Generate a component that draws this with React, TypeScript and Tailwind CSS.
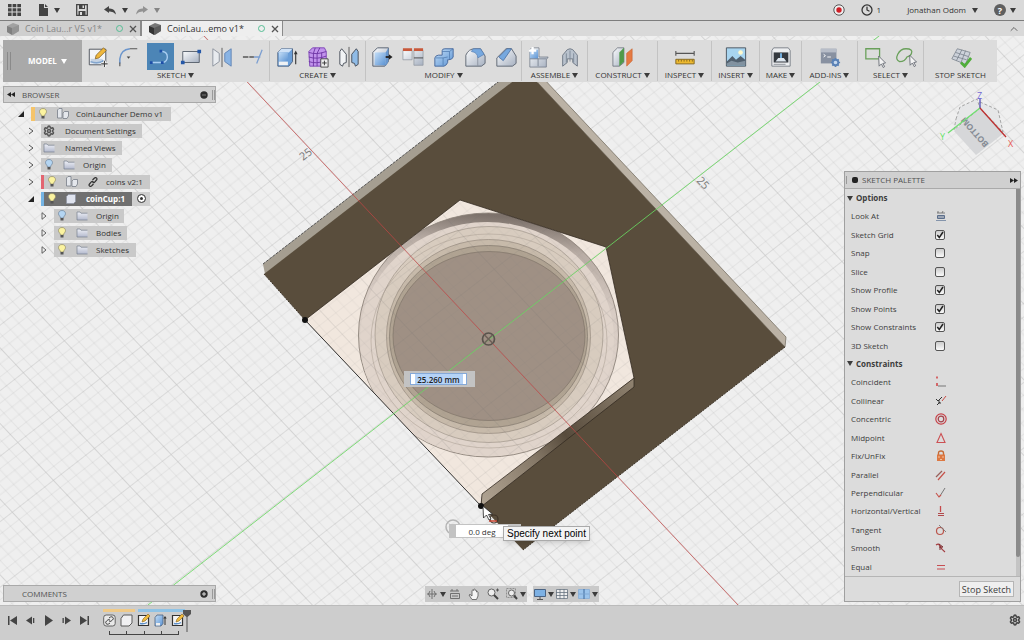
import type { ReactNode } from "react"
import { ChevronUp, Clock, Settings } from "lucide-react"
import clsx from "clsx"

const Svg = ({ children, size = "w-6 h-6", box = "0 0 24 24" }: { children: ReactNode; size?: string; box?: string }) => (
  <svg viewBox={box} className={clsx(size, "shrink-0")} fill="none" aria-hidden="true">
    {children}
  </svg>
)

const Caret = ({ className = "text-[#3c3c3c]" }: { className?: string }) => (
  <svg viewBox="0 0 6 5" className={clsx("h-[5px] w-1.5 shrink-0", className)} aria-hidden="true">
    <path d="M0 0h6L3 5z" fill="currentColor" />
  </svg>
)

/* ---------- Toolbar icons ---------- */

const icons: Record<string, ReactNode> = {
  createSketch: (
    <>
      <path d="M2.500 3.500h18v17h-18z" fill="#f3f5f8" stroke="#4a4f58" />
      <path d="M4 17q8 3 14-1" stroke="#4c83c0" strokeWidth="1.500" />
      <path d="M4 14h13v5H4z" fill="#a9bdd6" opacity=".6" />
      <path d="m9 14 1-4 8-8 3 3-8 8z" fill="#f0b83c" stroke="#7a5a24" strokeWidth=".8" />
      <path d="M19 16v7M15.500 19.500h7" stroke="#fff" strokeWidth="3" />
      <path d="M19 16v7M15.500 19.500h7" stroke="#444" strokeWidth="1.300" />
    </>
  ),
  fillet2d: (
    <>
      <path d="M2 19v-5Q3 4 13 3" stroke="#6b95cc" strokeWidth="1.600" />
      <path d="M13 3h8M2 18v4" stroke="#555" strokeWidth="1.200" />
      <path d="M9.500 11.500h4l-2 2.500z" fill="#444" />
    </>
  ),
  line: (
    <>
      <path d="M3 18h12q5-1 5-6t-5-6h-2" stroke="#a8cdf1" strokeWidth="1.500" />
      <path d="M1 16.500h3v3H1zM13 16.500h3v3h-3zM11.500 4h3v3h-3z" fill="#1d4fa8" />
    </>
  ),
  rectangle: (
    <>
      <path d="M3 6h18v12H3z" fill="url(#steel)" stroke="#555e6a" />
      <path d="M19 4h4v4h-4zM1 16h4v4H1z" fill="#2558a8" />
    </>
  ),
  mirror: (
    <>
      <path d="m2 3 7 5v9l-7 5z" fill="#e8ebef" stroke="#8b929c" />
      <path d="m22 3-7 5v9l7 5z" fill="#8ab4e4" stroke="#6083b3" />
      <path d="M12 2v21" stroke="#555" />
    </>
  ),
  trim: (
    <>
      <path d="M1 12h12" stroke="#555" strokeWidth="1.400" strokeDasharray="6 1" />
      <path d="M13 12h7M22 4l-6 15" stroke="#7c9fd1" strokeWidth="1.400" />
    </>
  ),
  extrude: (
    <>
      <path d="M2 7 6 3h12v14l-4 5H2z" fill="#6a9ed8" stroke="#4a5f7d" />
      <path d="m2 7 4-4h12l-4 4z" fill="#cfe2f7" />
      <path d="M3 7h10v10H3z" fill="url(#blue)" />
      <path d="M3 17h10v4H3z" fill="#eef1f4" />
      <path d="M21.500 20V7" stroke="#333" strokeWidth="1.200" />
      <path d="M19.500 9h4l-2-4z" fill="#333" />
    </>
  ),
  form: (
    <>
      <path d="M2 6 6 2h13l2 4v13l-4 3H3z" fill="#c193ec" stroke="#7c43b5" strokeLinejoin="round" />
      <path d="M2 7q8 3 19-1M2 12q9 3 19-1M2 17q8 3 18-1M7 8v14M11 8v14M16 7v14M9 2 7 8M14 2l-3 6" stroke="#6d35a4" />
      <path d="M15 14h8v9h-8z" fill="#eee" stroke="#444" />
      <path d="M19 16v5M16.500 18.500h5" stroke="#333" />
    </>
  ),
  mirrorFeature: (
    <>
      <path d="M2 6 4 3l5 6v9l-3 1-1 3-3-2z" fill="#f1f3f5" stroke="#444a55" />
      <path d="m22 6-2-3-5 6v9l3 1 1 3 3-2z" fill="#8fbbe6" stroke="#444a55" />
      <path d="M12 1v22" stroke="#555" />
    </>
  ),
  pressPull: (
    <>
      <path d="M2 7 7 2h12v15l-4 5H2z" fill="url(#steel)" stroke="#525c6b" />
      <path d="M4 7h12v14H4z" fill="url(#blue)" />
      <path d="m16 7 3-5v15l-3 5z" fill="#6797cf" />
      <path d="M16 12h5" stroke="#222" strokeWidth="2" />
      <path d="M19.500 9v6l4-3z" fill="#222" />
    </>
  ),
  align: (
    <>
      <path d="M1 5h10v10H1zM13 5h10v16H13z" fill="url(#steel)" stroke="#9197a0" strokeWidth=".8" />
      <path d="M1 2.500h10v3H1zM13 2.500h10v3H13z" fill="#c8583a" />
      <path d="M13 13h10" stroke="#444" />
    </>
  ),
  combine: (
    <>
      <path d="M10 5q0-2 3-2h9v9q-1 3-5 3h-1v3q-1 3-4 4H2v-9q1-3 4-3h4z" fill="url(#blue)" stroke="#44669a" />
      <path d="M10 6h8l4-3M18 6v8M3 13h8v8M11 13l5-1" stroke="#4d78ae" strokeWidth=".8" />
    </>
  ),
  fillet: (
    <>
      <path d="M2 22V10q3-7 10-7h6l5 8v8l-4 3z" fill="url(#steel)" stroke="#5c6470" />
      <path d="M10 3h8l4 6-7 4q0-6-7-7z" fill="#76a8df" stroke="#5179ae" strokeWidth=".7" />
      <path d="M15 13v9" stroke="#8b93a0" />
    </>
  ),
  chamfer: (
    <>
      <path d="M2 13 12 3h6l5 8v8l-4 3H2z" fill="url(#steel)" stroke="#5c6470" />
      <path d="m4 12 9-9h5l-9 13z" fill="#76a8df" stroke="#46699b" strokeWidth=".8" />
    </>
  ),
  component: (
    <>
      <path d="M2 4 4 2h8v10h10l-2 3v8H2z" fill="url(#steel)" stroke="#6c7482" strokeWidth=".8" />
      <path d="M2 4h9v10H2z" fill="url(#blue)" />
      <path d="M2 14h18M11 14v8" stroke="#7b8493" />
      <path d="M5 1v8M1 5h8" stroke="#fff" strokeWidth="2.500" />
    </>
  ),
  joint: (
    <>
      <path d="m4 10 5-6 3-1 3 1 5 6v12l-5-4v-4H9v4l-5 4z" fill="#b9c2cd" stroke="#6c7683" />
      <path d="M12 5v12M8 8v10M16 8v10" stroke="#7d8997" />
    </>
  ),
  construct: (
    <>
      <path d="m1 7 5-5h7v16l-5 4H1z" fill="url(#steel)" stroke="#5e6670" strokeWidth=".8" />
      <path d="m8 7 5-5v15l-5 5z" fill="#4f9a49" />
      <path d="m16 8 6-5v13l-6 6z" fill="#e57a43" stroke="#c55d2b" strokeWidth=".6" />
    </>
  ),
  inspect: (
    <>
      <path d="M2 8h20M2 5.500v5M22 5.500v5" stroke="#555" strokeWidth="1.200" />
      <path d="M2 14.500h20v5H2z" fill="#edb92f" stroke="#81651f" />
      <path d="M5 15v2M8 15v2M11 15v2M14 15v2M17 15v2M20 15v2" stroke="#6b5418" strokeWidth=".8" />
    </>
  ),
  insert: (
    <>
      <path d="M1.500 2h21v20h-21z" fill="#a8d5f0" stroke="#46515c" />
      <circle cx="17" cy="7" r="2.500" fill="#fff9cd" />
      <path d="m2 17 6-6 4 4 5-4 5 4v6H2z" fill="#51606e" />
      <path d="m2 19 5-3 7 2 8-2v5H2z" fill="#8292a0" />
    </>
  ),
  make: (
    <>
      <path d="M4 2h16l2 3v17H2V5z" fill="#eceef0" stroke="#777d85" />
      <path d="M4 7h16v11H4z" fill="#34393f" />
      <path d="M11 8h2v5h-2z" fill="#79b9ec" />
      <path d="m6 17 3-4h6l3 4z" fill="#dfe7ef" />
      <path d="M4 20h13" stroke="#8b9197" />
    </>
  ),
  addins: (
    <>
      <path d="M2 3h17v16H2z" fill="#8891a1" />
      <path d="M2 3h17v4H2z" fill="#b7bdc8" />
      <path d="m5 9 2 1.500L5 12M9 12h4" stroke="#fff" />
      <path d="M18 13v10M13 18h10M14.500 14.500l7 7M21.500 14.500l-7 7" stroke="#5b82b6" strokeWidth="1.800" />
      <circle cx="18" cy="18" r="3" stroke="#5b82b6" strokeWidth="2" fill="#c5d8ee" />
    </>
  ),
  selectBox: (
    <>
      <path d="M2 3h15v11H2z" stroke="#69a05a" strokeWidth="1.400" />
      <path d="m16 11 .500 11 2.500-2.500 2 4 1.500-1-2-3.500 3-.500z" fill="#f3f3f3" stroke="#5c616b" strokeWidth=".9" />
    </>
  ),
  selectFree: (
    <>
      <path d="M5 17Q0 15 3 9t9-6q8 0 6 5-1 3-5 4-2 5-8 5z" stroke="#69a05a" strokeWidth="1.400" />
      <path d="m16 10 .500 11 2.500-2.500 2 4 1.500-1-2-3.500 3-.500z" fill="#f3f3f3" stroke="#5c616b" strokeWidth=".9" />
    </>
  ),
  stopSketch: (
    <>
      <path d="m8 3 14 4-5 13L2 14z" fill="#cdd2da" stroke="#737b87" strokeWidth=".8" />
      <path d="m13 4-6 12M17 5l-5 13M6 7l14 4.500M4 11l14 4" stroke="#737b87" strokeWidth=".8" />
      <path d="m12 18 4 4 7-9" stroke="#4fae3a" strokeWidth="3" />
    </>
  ),
}

const groups = [
  { label: "SKETCH", width: "w-[188px]", tools: ["createSketch", "fillet2d", "line", "rectangle", "mirror", "trim"] },
  { label: "CREATE", width: "w-24", tools: ["extrude", "form", "mirrorFeature"] },
  { label: "MODIFY", width: "w-[156px]", tools: ["pressPull", "align", "combine", "fillet", "chamfer"] },
  { label: "ASSEMBLE", width: "w-[66px]", tools: ["component", "joint"] },
  { label: "CONSTRUCT", width: "w-[70px]", tools: ["construct"] },
  { label: "INSPECT", width: "w-[54px]", tools: ["inspect"] },
  { label: "INSERT", width: "w-12", tools: ["insert"] },
  { label: "MAKE", width: "w-[42px]", tools: ["make"] },
  { label: "ADD-INS", width: "w-14", tools: ["addins"] },
  { label: "SELECT", width: "w-[66px]", tools: ["selectBox", "selectFree"] },
  { label: "STOP SKETCH", width: "w-[73px]", tools: ["stopSketch"] },
]

function TopBar() {
  return (
    <header className="flex h-[21px] items-center justify-between border-b border-[#7d7d7d] bg-[#d9d9d9] px-2">
      <div className="flex items-center">
        <button aria-label="Data panel">
          <Svg size="w-[13px] h-3" box="0 0 13 12">
            <path d="M0 0h3.600v3.300H0zM4.600 0h3.700v3.300H4.600zM9.300 0H13v3.300H9.300zM0 4.300h3.600v3.300H0zM4.600 4.300h3.700v3.300H4.600zM9.300 4.300H13v3.300H9.300zM0 8.600h3.600V12H0zM4.600 8.600h3.700V12H4.600zM9.300 8.600H13V12H9.300z" fill="#444" />
          </Svg>
        </button>
        <button aria-label="File" className="ml-[18px] flex items-center gap-1.5">
          <Svg size="w-[9px] h-3" box="0 0 9 12">
            <path d="M0 0h5v4h4v8H0zM6 0l3 3H6z" fill="#444" />
          </Svg>
          <Caret />
        </button>
        <button aria-label="Save" className="ml-4">
          <Svg size="w-3 h-3" box="0 0 12 12">
            <path d="M.700.700h10.600v10.600H.700z" stroke="#444" strokeWidth="1.300" />
            <path d="M3 1h6v4H3zM2.500 7h7v4h-7z" fill="#444" />
            <path d="M6.500 1.500h1.500V4H6.500zM4 8h2v3H4z" fill="#ddd" />
          </Svg>
        </button>
        <button aria-label="Undo" className="ml-4 flex items-center gap-1.5">
          <Svg size="w-3 h-2.5" box="0 0 12 10">
            <path d="M0 4.500 5 1v2.500q6-.500 7 6-3-3.500-7-3V8z" fill="#444" />
          </Svg>
          <Caret />
        </button>
        <button aria-label="Redo" className="ml-2 flex items-center gap-1.5">
          <Svg size="w-3 h-2.5" box="0 0 12 10">
            <path d="M12 4.500 7 1v2.500Q1 3 0 9.500q3-3.500 7-3V8z" fill="#929292" />
          </Svg>
          <Caret className="text-[#858585]" />
        </button>
      </div>
      <div className="flex items-center">
        <button aria-label="Record">
          <Svg size="w-3 h-3" box="0 0 12 12">
            <circle cx="6" cy="6" r="5.200" stroke="#555" fill="#eee" />
            <circle cx="6" cy="6" r="2.700" fill="#cf1f26" />
          </Svg>
        </button>
        <button className="ml-4 flex items-center gap-1">
          <Clock className="h-3 w-3 text-[#333]" strokeWidth={2.5} />
          <span>1</span>
        </button>
        <button className="ml-[26px] flex items-center gap-1.5">
          <span>Jonathan Odom</span>
          <Caret />
        </button>
        <button aria-label="Help" className="ml-4 flex items-center gap-1">
          <span className="flex h-3 w-3 items-center justify-center rounded-full bg-[#5f5f5f] text-[9px] font-bold leading-none text-white">?</span>
          <Caret />
        </button>
      </div>
    </header>
  )
}

function DocTab({ title, active }: { title: string; active?: boolean }) {
  return (
    <div
      className={clsx(
        "flex items-center border-r border-[#8a8a8a] text-[9px]",
        active ? "w-[142px] border-l bg-[#eee] text-[#333]" : "w-[141px] bg-[#cfcfcf] text-[#868686]"
      )}
    >
      <Svg size={clsx("w-3 h-3 ml-[7px]", !active && "opacity-50")} box="0 0 12 12">
        <path d="m0 3 6-3 6 2v6l-6 4-6-3z" fill="#777" />
        <path d="m0 3 5 2v7l-5-3z" fill="#333" />
        <path d="m5 5 7-3v6l-7 4z" fill="#5c5c5c" />
      </Svg>
      <button className="ml-1.5 flex-1 whitespace-nowrap text-left">{title}</button>
      <span className="h-[7px] w-[7px] rounded-full border border-[#55bd94]" />
      <button aria-label={`Close ${title}`} className="ml-1.5 mr-[3px]">
        <Svg size="w-2 h-2" box="0 0 8 8">
          <path d="m1 1 6 6m0-6L1 7" stroke="#555" strokeWidth="1.300" />
        </Svg>
      </button>
    </div>
  )
}

function Toolbar() {
  return (
    <div className="mx-[3px] mt-1 flex h-[42px] w-fit bg-[#dcdcdc]">
      <button className="flex w-[79px] items-center bg-[#a9a9a9] text-[8px] font-bold text-white">
        <span className="ml-1 h-[18px] w-1 border-x border-[#8a8a8a]" />
        <span className="ml-[17px] mr-1">MODEL</span>
        <Caret className="text-white" />
      </button>
      {groups.map((g, i) => (
        <div
          key={g.label}
          className={clsx("my-px flex flex-col items-center pt-0.5", g.width, i < groups.length - 1 && "border-r border-[#c3c3c3]")}
        >
          <div className="flex gap-1">
            {g.tools.map((t) => (
              <button
                key={t}
                aria-label={t}
                className={clsx("flex h-[27px] w-[27px] items-center justify-center", t === "line" && "bg-[#4c85b6]")}
              >
                <Svg size="w-[22px] h-[22px]">{icons[t]}</Svg>
              </button>
            ))}
          </div>
          <button className="flex h-2.5 items-center gap-0.5 whitespace-nowrap leading-none">
            <span>{g.label}</span>
            {g.label !== "STOP SKETCH" && <Caret />}
          </button>
        </div>
      ))}
    </div>
  )
}

/* ---------- Browser tree ---------- */

const Bulb = ({ off }: { off?: boolean }) => (
  <Svg size="w-2 h-[11px]" box="0 0 8 11">
    <path d="M4 .500C1.500.500.500 2.200.500 3.700.500 5.500 2.300 6 2.500 8h3c.200-2 2-2.500 2-4.300C7.500 2.200 6.500.500 4 .500z" fill={off ? "#b4d5f2" : "#fbf3a0"} stroke={off ? "#6d8299" : "#8f8a64"} strokeWidth=".7" />
    <path d="M2.500 8h3v2.500h-3z" fill="#555" />
  </Svg>
)

const Folder = () => (
  <Svg size="w-3 h-2.5" box="0 0 12 10">
    <path d="M1 9V1h3l1 1.200h6.500V9z" fill="url(#folder)" />
    <path d="M1 1v8h10.500M1 1h3l1 1.200h6.500" stroke="#777f8e" strokeWidth=".7" />
  </Svg>
)

const Parts = () => (
  <Svg size="w-3 h-[11px]" box="0 0 12 11">
    <path d="M.500 2 2 .500h3V10H.500zM6 5l1.500-1.500h4V8L10 10.500H6z" fill="#e4e7ec" stroke="#777d88" strokeWidth=".8" />
  </Svg>
)

const Body = () => (
  <Svg size="w-2.5 h-2.5" box="0 0 10 10">
    <path d="m.500 2.500 2-2h7v7l-2 2h-7z" fill="#dfe3ee" stroke="#8d93a3" strokeWidth=".7" />
  </Svg>
)

const LinkIcon = () => (
  <Svg size="w-2.5 h-2.5" box="0 0 10 10">
    <path d="m4.500 3 2-2q1-.800 2 0t0 2l-2 2.300q-1 .800-2 0M5.500 7l-2 2q-1 .800-2 0t0-2l2-2.300q1-.800 2 0" stroke="#333" strokeWidth="1.200" />
  </Svg>
)

const Expander = ({ kind }: { kind: string }) => (
  <Svg size="w-1.5 h-2" box="0 0 6 8">
    {kind === "open" && <path d="M6 1v6H0z" fill="#222" />}
    {kind === "chevron" && <path d="m1 1 4 3-4 3" stroke="#444" strokeWidth=".9" />}
    {kind === "closed" && <path d="m1 .700 4 3.300-4 3.300z" stroke="#555" strokeWidth=".9" />}
  </Svg>
)

type Node = {
  name: string
  indent: string
  kind: string
  chip: string
  stripe?: string
  icons: ReactNode
  gap: string
  active?: boolean
}

const nodes: Node[] = [
  { name: "CoinLauncher Demo v1", indent: "pl-[15px]", kind: "open", chip: "ml-[7px] pl-1 w-[140px]", stripe: "border-l-4 border-[#f5c46b]", icons: <><Bulb /><Parts /></>, gap: "ml-[7px]" },
  { name: "Document Settings", indent: "pl-[25px]", kind: "chevron", chip: "ml-[7px] pl-0.5 w-[101px]", icons: <Settings className="h-3 w-3 text-[#555]" strokeWidth={3} />, gap: "ml-2.5" },
  { name: "Named Views", indent: "pl-[25px]", kind: "chevron", chip: "ml-[7px] pl-0.5 w-[81px]", icons: <Folder />, gap: "ml-2.5" },
  { name: "Origin", indent: "pl-[25px]", kind: "chevron", chip: "ml-[7px] pl-1 w-[71px]", icons: <><Bulb off /><Folder /></>, gap: "ml-2" },
  { name: "coins v2:1", indent: "pl-[25px]", kind: "chevron", chip: "ml-[7px] pl-1 w-[109px]", stripe: "border-l-[3px] border-[#e36570]", icons: <><Bulb /><Parts /><LinkIcon /></>, gap: "ml-2" },
  { name: "coinCup:1", indent: "pl-[25px]", kind: "open", chip: "ml-[7px] pl-1 w-[91px]", stripe: "border-l-[3px] border-[#74b4e4]", icons: <><Bulb /><Body /></>, gap: "ml-2.5", active: true },
  { name: "Origin", indent: "pl-[38px]", kind: "closed", chip: "ml-[7px] pl-1 w-[70px]", icons: <><Bulb off /><Folder /></>, gap: "ml-2" },
  { name: "Bodies", indent: "pl-[38px]", kind: "closed", chip: "ml-[7px] pl-1 w-[73px]", icons: <><Bulb /><Folder /></>, gap: "ml-2" },
  { name: "Sketches", indent: "pl-[38px]", kind: "closed", chip: "ml-[7px] pl-1 w-[82px]", icons: <><Bulb /><Folder /></>, gap: "ml-2" },
]

function PanelBar({ title, sign, rewind }: { title: string; sign: string; rewind?: boolean }) {
  return (
    <div className="flex h-[17px] w-[213px] items-center border border-[#a9a9a9] bg-[#d0d0d0] text-[#505050]">
      <span className="w-[18px] pl-[3px]">
        {rewind && (
          <Svg size="w-2 h-[5px]" box="0 0 8 5">
            <path d="M4 0v5L0 2.500zM8 0v5L4 2.500z" fill="#222" />
          </Svg>
        )}
      </span>
      <h2 className="flex-1">{title}</h2>
      <button aria-label={`Toggle ${title}`}>
        <Svg size="w-2 h-2" box="0 0 8 8">
          <circle cx="4" cy="4" r="3.700" fill="#2e2e2e" />
          <path d={sign === "plus" ? "M2 4h4M4 2v4" : "M2 4h4"} stroke={sign === "plus" ? "#ddd" : "#777"} />
        </Svg>
      </button>
      <span className="ml-1 h-2.5 w-[3px] border-x border-[#9a9a9a]" />
    </div>
  )
}

function Browser() {
  return (
    <section>
      <PanelBar title="BROWSER" sign="minus" rewind />
      <ul className="mt-0.5 text-[#333]">
        {nodes.map((n, i) => (
          <li key={i} className={clsx("flex h-[17px] items-center", n.indent)}>
            <Expander kind={n.kind} />
            <button
              className={clsx(
                "flex h-[14px] items-center whitespace-nowrap",
                n.chip,
                n.stripe,
                n.active ? "bg-[#707070] font-bold text-white" : "bg-[#c9c9c9]"
              )}
            >
              <span className="flex items-center gap-2.5">{n.icons}</span>
              <span className={n.gap}>{n.name}</span>
            </button>
            {n.active && (
              <span className="flex h-[14px] w-[18px] items-center justify-center bg-[#cfcfcf]">
                <input type="radio" defaultChecked aria-label="Activate coinCup" className="h-[9px] w-[9px] appearance-none rounded-full border border-[#555] bg-[#333] ring-2 ring-inset ring-white" />
              </span>
            )}
          </li>
        ))}
      </ul>
    </section>
  )
}

/* ---------- Sketch palette ---------- */

const options: [string, boolean][] = [
  ["Sketch Grid", true],
  ["Snap", false],
  ["Slice", false],
  ["Show Profile", true],
  ["Show Points", true],
  ["Show Constraints", true],
  ["3D Sketch", false],
]

const constraints: [string, ReactNode][] = [
  ["Coincident", <><path d="M3 10h8" stroke="#777" /><path d="M2 .500v2M2 7v3" stroke="#d1494b" strokeWidth="1.600" /></>],
  ["Collinear", <><path d="m1 4 2 2 4-4M2 10l3-3M4 5v3h2" stroke="#333" /><path d="m7 6 4-5" stroke="#c94a43" /></>],
  ["Concentric", <><circle cx="6" cy="6" r="5.200" stroke="#c63f46" strokeWidth="1.200" /><circle cx="6" cy="6" r="2.800" stroke="#a3424b" strokeWidth="1.200" /></>],
  ["Midpoint", <path d="m6 1.500 4 9H2z" stroke="#cc5053" strokeWidth="1.100" />],
  ["Fix/UnFix", <><path d="M3.500 6V3q0-2 2.500-2t2.500 2v3" stroke="#c56a35" strokeWidth="1.400" /><path d="M2 4.500h8v6.500H2z" fill="#dd7842" /><path d="M3 7h2M7 7h2M5 9.500h2" stroke="#f3c19c" /></>],
  ["Parallel", <><path d="m1 8 6-6" stroke="#98605b" strokeWidth="1.200" /><path d="m3 11 7-8" stroke="#c65149" strokeWidth="1.200" /></>],
  ["Perpendicular", <><path d="m5 9 5-8" stroke="#777" /><path d="m1 6 3 4 2-2" stroke="#c65149" strokeWidth="1.100" /></>],
  ["Horizontal/Vertical", <><path d="M5.500 1v6" stroke="#c6494b" strokeWidth="1.300" /><path d="M3 8.500h6M3 10.500h6" stroke="#b0494b" /></>],
  ["Tangent", <><circle cx="5" cy="7" r="3.500" stroke="#bb554b" strokeWidth="1.200" /><path d="m4 1 7 7" stroke="#777" strokeWidth=".9" /></>],
  ["Smooth", <><path d="M1 3q3-2 4 1t5 6" stroke="#a33e42" strokeWidth="1.300" /><path d="m4 2 4 3H4M5 8V5" stroke="#7d2f33" /></>],
  ["Equal", <path d="M2 4.500h8M2 8h8" stroke="#c74e52" strokeWidth="1.200" />],
]

const SectionTitle = ({ children }: { children: ReactNode }) => (
  <button className="flex h-[18px] items-center gap-[3px] pl-0.5 font-bold">
    <Caret />
    <span>{children}</span>
  </button>
)

function SketchPalette() {
  return (
    <section className="flex w-[177px] flex-1 flex-col border border-[#a0a0a0] bg-[#dcdcdc] text-[#3c3c3c]">
      <div className="flex h-[17px] items-center border-b border-[#aaa] bg-[#d0d0d0]">
        <span className="h-2 w-0.5 border-r border-[#999]" />
        <span className="ml-[5px] h-1.5 w-1.5 rounded-xs bg-[#222]" />
        <h2 className="ml-1 flex-1 text-[#505050]">SKETCH PALETTE</h2>
        <Svg size="w-2 h-[5px] mr-0.5" box="0 0 8 5">
          <path d="M0 0v5l4-2.500zM4 0v5l4-2.500z" fill="#222" />
        </Svg>
      </div>
      <div className="flex flex-1">
        <div className="flex flex-1 flex-col justify-between">
          <SectionTitle>Options</SectionTitle>
          <button className="flex h-[18px] items-center pl-1.5 text-left">
            <span className="w-[84px]">Look At</span>
            <Svg size="w-3 h-3" box="0 0 12 12">
              <path d="M1 10.500h10" stroke="#8494ab" />
              <path d="M2.500 5.500h7v3h-7z" stroke="#5c6f8c" />
              <path d="M2 3h8M3 1v2M8 1l-1 2" stroke="#666" strokeWidth=".8" />
              <path d="M3 7h6" stroke="#5c6f8c" />
            </Svg>
          </button>
          {options.map(([name, on]) => (
            <label key={name} className="flex h-[18px] items-center pl-1.5">
              <span className="w-[84px] whitespace-nowrap">{name}</span>
              <span className="relative flex">
                <input
                  type="checkbox"
                  defaultChecked={on}
                  className="peer h-2.5 w-2.5 appearance-none rounded-[2px] border border-[#555] bg-linear-to-b from-[#ccc] to-[#fafafa]"
                />
                <svg viewBox="0 0 10 10" className="pointer-events-none absolute inset-0 hidden h-2.5 w-2.5 peer-checked:block" fill="none">
                  <path d="m2.300 5 2 2.500L8 2" stroke="#222" strokeWidth="1.500" />
                </svg>
              </span>
            </label>
          ))}
          <SectionTitle>Constraints</SectionTitle>
          {constraints.map(([name, icon]) => (
            <button key={name} className="flex h-[18px] items-center pl-1.5 text-left">
              <span className="w-[84px] whitespace-nowrap">{name}</span>
              <Svg size="w-3 h-3" box="0 0 12 12">{icon}</Svg>
            </button>
          ))}
        </div>
        <div className="w-1 bg-[#c4c4c4]">
          <div className="h-[95%] rounded-b-sm bg-[#8a8a8a]" />
        </div>
      </div>
      <div className="flex h-[25px] items-center justify-end border-t border-[#b5b5b5] pr-1.5">
        <button className="h-4 border border-[#b5b5b5] bg-[#efefef] px-0.5 text-[9px] leading-none">Stop Sketch</button>
      </div>
    </section>
  )
}

/* ---------- Canvas ---------- */

function ViewCube() {
  return (
    <svg viewBox="940 86 80 72" className="mr-0.5 h-[72px] w-20 self-end" aria-label="View cube">
      <path d="m981 107 24 25-28 22-22-24z" fill="#d6d7d9" />
      <path d="m957 118 4-12 17-8 3 9-26 22zM981 101l18 8 5 22-23-24z" fill="#e6e7e8" stroke="#888" strokeWidth=".7" strokeDasharray="3 2" />
      <text x="0" y="0" transform="matrix(-.62 -.7 .7 -.62 990 143)" fontSize="9" fill="#868c95" className="font-bold">BOTTOM</text>
      <path d="M981 107V97" stroke="#5a54bd" strokeWidth="1.300" />
      <path d="m981 107-32 25" stroke="#70e070" strokeWidth="1.300" />
      <path d="m981 107 26 29" stroke="#bd3030" strokeWidth="1.300" />
      <text x="978" y="98" fontSize="9" fill="#7169d4">Z</text>
      <text x="941" y="139" fontSize="9" fill="#65e268">Y</text>
      <text x="1009" y="146" fontSize="9" fill="#e85a52">X</text>
    </svg>
  )
}

function Scene() {
  return (
    <svg viewBox="0 36 1024 569" preserveAspectRatio="xMidYMid slice" className="absolute inset-0 h-full w-full" fill="none">
      <defs>
        <linearGradient id="blue" x1="0" y1="0" x2="1" y2="1">
          <stop stopColor="#c4def7" />
          <stop offset="1" stopColor="#5b93d3" />
        </linearGradient>
        <linearGradient id="steel" x1="0" y1="0" x2="1" y2="1">
          <stop stopColor="#fbfcfd" />
          <stop offset="1" stopColor="#a6b0c0" />
        </linearGradient>
        <linearGradient id="folder" x1="0" y1="0" x2="0" y2="1">
          <stop stopColor="#eef0f6" />
          <stop offset="1" stopColor="#b3b9cd" />
        </linearGradient>
        <linearGradient id="rim" x1=".4" y1="0" x2=".3" y2="1">
          <stop stopColor="#7d726b" />
          <stop offset=".12" stopColor="#b8aca4" />
          <stop offset=".35" stopColor="#d8ccc4" />
          <stop offset="1" stopColor="#e5d9cf" />
        </linearGradient>
        <linearGradient id="wall" x1="482" y1="500" x2="634" y2="382" gradientUnits="userSpaceOnUse">
          <stop stopColor="#b0a392" />
          <stop offset=".35" stopColor="#857867" />
          <stop offset=".55" stopColor="#574b3c" />
          <stop offset="1" stopColor="#8f8270" />
        </linearGradient>
        <pattern id="grid" width="52" height="52" patternUnits="userSpaceOnUse" patternTransform="matrix(.79 -.613 .684 .729 488 339)">
          <path d="M10.400 0v52M20.800 0v52M31.200 0v52M41.600 0v52M0 10.400h52M0 20.800h52M0 31.200h52M0 41.600h52" stroke="#777" strokeOpacity=".13" strokeWidth=".8" />
          <path d="M0 0h52M0 0v52" stroke="#666" strokeOpacity=".32" strokeWidth="1.200" />
        </pattern>
        <clipPath id="pocket">
          <path d="m305 320 155-120 146 47 28 131-152 117-1 11z" />
        </clipPath>
      </defs>

      <path d="M0 36h1024v569H0z" fill="#efefef" />
      <path d="M0 36h1024v569H0z" fill="url(#grid)" />

      {/* Plate: sides first, then the dark face */}
      <path d="m263 264 248-192 9 5-255 197z" fill="#a59e91" />
      <path d="m263 264 248-192" stroke="#555" strokeDasharray="3 1" />
      <path d="m528 62 258 275-1 10-247-264z" fill="#bbb2a5" stroke="#6c6457" strokeWidth=".7" />
      <path d="M264 274 525 72l13 11 247 264-262 203-218-230z" fill="#594d3c" />
      <path d="M785 347 523 550M264 274l41 46" stroke="#3e352a" strokeDasharray="2 1" />

      {/* Pocket with the cup below it */}
      <path d="m305 320 155-120 146 47 28 131-152 117-1 11z" fill="#f1e7de" />
      <g clipPath="url(#pocket)">
        <ellipse cx="488.500" cy="335" rx="130" ry="122" fill="url(#rim)" stroke="#8d837b" strokeWidth=".9" />
        <ellipse cx="487" cy="339" rx="127" ry="117" fill="#e0d4cb" />
        <ellipse cx="489" cy="334.500" rx="114" ry="108" fill="#d8ccbf" stroke="#a1968b" strokeWidth=".7" />
        <ellipse cx="489" cy="341" rx="118" ry="107" stroke="#b0a499" strokeWidth=".6" />
        <ellipse cx="488.500" cy="336.500" rx="102" ry="97" fill="#c7baaa" stroke="#968b7f" strokeWidth=".7" />
        <ellipse cx="488.500" cy="336.500" rx="99" ry="91" fill="#b0a392" stroke="#81776b" strokeWidth=".7" />
        <ellipse cx="489" cy="336" rx="96" ry="84.500" fill="#9f9084" stroke="#7f7468" strokeWidth=".7" />
        <path d="M300 190h340v320H300z" fill="url(#grid)" opacity=".7" />
      </g>
      <path d="m482 494 152-116v9L482 506z" fill="url(#wall)" />
      <path d="m481 506 1-12 152-116v9L482 506M606 247l28 131M305 320l155-120M460 200l146 47" stroke="#332b22" strokeWidth=".8" />
      <path d="m305 320 176 186" stroke="#222" strokeWidth=".9" />

      {/* Axes */}
      <path d="M204 36 738 605" stroke="#c84444" strokeOpacity=".7" />
      <path d="M879 36 148 605" stroke="#6ad862" strokeOpacity=".85" />
      <circle cx="488.500" cy="339" r="6" stroke="#59534c" strokeWidth="1.700" />
      <path d="m484.500 335 8 8M492.500 335l-8 8" stroke="#6c6259" strokeWidth="1.500" />
      <circle cx="305" cy="320" r="3" fill="#111" />
      <circle cx="481" cy="506" r="3" fill="#111" />
      <text transform="translate(303 161) rotate(-38)" fontSize="11" fill="#7c7c7c">25</text>
      <text transform="translate(696 181) rotate(47)" fontSize="11" fill="#7c7c7c">25</text>

      {/* Rotation handle, cursor and its constraint glyph */}
      <circle cx="453" cy="527" r="7" stroke="#b5b5b5" strokeWidth="1.500" />
      <circle cx="494" cy="519" r="4" stroke="#3e3329" strokeWidth="1.200" />
      <path d="M489 521h8" stroke="#c9432f" strokeWidth="1.500" />
      <path d="m483 506 .500 12 3-3 2.500 5 2-1-2.500-4.500 4-.500z" fill="#fff" stroke="#222" strokeWidth=".8" />
    </svg>
  )
}

function CanvasInputs() {
  return (
    <>
      <div className="absolute left-[404px] top-[335px] flex h-4 w-[71px] items-center bg-[#c3c3c3] pl-1.5">
        <input
          aria-label="Length"
          defaultValue="25.260 mm"
          className="h-3 w-[57px] border border-[#85a9d8] bg-linear-to-r from-[#b5d3f7] to-[#b5d3f7] bg-[length:48px_100%] bg-center bg-no-repeat text-center text-[8px] font-semibold text-[#222] [background-color:white]"
        />
      </div>
      <div className="absolute left-[449px] top-[488px] flex h-3.5 w-[72px] items-center bg-[#c3c3c3] pl-[7px]">
        <input aria-label="Angle" defaultValue="0.0 deg" className="h-3 w-[52px] bg-white text-center text-[8px] text-[#333]" />
      </div>
      <div role="tooltip" className="absolute left-[503px] top-[490px] flex h-[15px] items-center whitespace-nowrap border border-[#aaa] bg-[#f4f4f4] px-[3px] font-['Liberation_Sans',sans-serif] text-[10px] text-black shadow-md">
        Specify next point
      </div>
    </>
  )
}

function NavBar() {
  return (
    <nav className="flex h-4 gap-1.5">
      <div className="flex items-center gap-[7px] bg-[#c9c9c9] px-px">
        <button aria-label="Orbit" className="flex items-center gap-0.5">
          <Svg size="w-3 h-3" box="0 0 12 12">
            <path d="M6 1v10M1 6h10M4 3q-3 3 0 6M8 3q3 3 0 6" stroke="#666" strokeWidth=".9" />
          </Svg>
          <Caret />
        </button>
        <button aria-label="Look at" className="-ml-1">
          <Svg size="w-3 h-3" box="0 0 12 12">
            <path d="M1 3h9M3 1v2M8 1v2M1.500 5.500h9v5h-9zM3 8h6" stroke="#666" strokeWidth=".9" />
          </Svg>
        </button>
        <button aria-label="Pan">
          <Svg size="w-3 h-3" box="0 0 12 12">
            <path d="M4 11.500 1 7l1-.600L4 8V2.500q.800-1 1.500 0V1.500q.800-1 1.500 0v1q.800-1 1.500 0v1.500q.900-1 1.500 0V8l-1.500 3.500z" fill="#f5f5f5" stroke="#555" strokeWidth=".8" />
          </Svg>
        </button>
        <button aria-label="Zoom">
          <Svg size="w-3 h-3" box="0 0 12 12">
            <circle cx="4.500" cy="4.500" r="3.500" fill="#eee" stroke="#666" />
            <path d="m7 7 4 4" stroke="#444" strokeWidth="2" />
            <path d="M9 2h3M10.500.500v3" stroke="#555" />
          </Svg>
        </button>
        <button aria-label="Fit" className="flex items-center gap-0.5">
          <Svg size="w-3 h-3" box="0 0 12 12">
            <path d="M.500.500h9v9h-9z" stroke="#777" strokeWidth=".7" strokeDasharray="2 1" />
            <circle cx="5.500" cy="5" r="3" fill="#eee" stroke="#666" />
            <path d="m8 7.500 3 3.500" stroke="#444" strokeWidth="2" />
          </Svg>
          <Caret />
        </button>
      </div>
      <div className="flex items-center gap-0.5 bg-[#c9c9c9] px-px">
        <button aria-label="Display settings" className="flex items-center gap-0.5">
          <Svg size="w-3 h-3" box="0 0 12 12">
            <path d="M.500 1.500h11v7H.500z" fill="#7db1e4" stroke="#4b6484" />
            <path d="M6 9v2M3 11.500h6" stroke="#555" />
          </Svg>
          <Caret />
        </button>
        <button aria-label="Grid settings" className="flex items-center gap-0.5">
          <Svg size="w-3 h-3" box="0 0 12 12">
            <path d="M.500 1h11v10H.500z" fill="#eee" />
            <path d="M.500 1.500h11v9H.500zM0 4.500h12M0 7.500h12M4 1v10M8 1v10" stroke="#687380" strokeWidth=".8" />
          </Svg>
          <Caret />
        </button>
        <button aria-label="Viewports" className="flex items-center gap-0.5">
          <Svg size="w-3 h-3" box="0 0 12 12">
            <path d="M.500 1.500h11v9H.500z" fill="#9bc4ec" stroke="#8fb2d8" />
            <path d="M6 1v10" stroke="#3f6a9c" />
            <path d="M1 6h10" stroke="#7ba4d0" strokeWidth=".8" />
          </Svg>
          <Caret />
        </button>
      </div>
    </nav>
  )
}

/* ---------- Timeline ---------- */

const playback: [string, string][] = [
  ["First", "M1 1h1.500v9H1zM10 1v9L3 5.500z"],
  ["Previous", "M7 1.500v8L1 5.500zM8 3h1.300v5H8z"],
  ["Play", "M2 0v11l8-5.500z"],
  ["Next", "M4 1.500v8l6-4zM1.500 3h1.300v5H1.500z"],
  ["Last", "M8.500 1H10v9H8.500zM1 1v9l7-4.500z"],
]

const SketchFeature = () => (
  <>
    <path d="M1.500 1.500h10v10h-10z" fill="#f5f5f5" stroke="#333" strokeWidth="1.200" />
    <path d="M3 9.500q4 1 7-1" stroke="#5d90ca" strokeWidth="1.500" />
    <path d="m5 8 1-3 5-5 2 2-5 5z" fill="#f0bb3d" stroke="#84611f" strokeWidth=".6" />
  </>
)

const features: [string, ReactNode][] = [
  ["Linked component", <><rect x=".7" y="1" width="11.500" height="11" rx="2.500" fill="#e8e8e8" stroke="#555" strokeWidth=".9" /><path d="m6 4 1.500-1q1.500-.800 2.500.500t-.500 2.500L8 7.200q-1.200.600-2-.400M7 9l-1.500 1q-1.500.800-2.500-.500T3.500 7L5 5.800q1.200-.600 2 .400" stroke="#444" /></>],
  ["Body", <path d="M1 4.500 3.500 1H12v8l-3 3H1z" fill="#f0f0f2" stroke="#5a5a5a" strokeLinejoin="round" />],
  ["Sketch", <SketchFeature />],
  ["Extrude", <><path d="M1 3.500 3 1h6v8.500L7 12H1z" fill="url(#blue)" stroke="#4a5f7d" strokeWidth=".8" /><path d="M2 9h4v2.500H2z" fill="#eee" /><path d="M11 11V4" stroke="#333" /><path d="M9.300 4.500h3.400L11 2z" fill="#333" /></>],
  ["Sketch", <SketchFeature />],
]

function Timeline() {
  return (
    <footer className="flex h-[35px] justify-between border-t border-[#bbb] bg-[#cdcdcd] px-[7px]">
      <div className="flex">
        <div className="flex items-center gap-[7px] pb-1.5">
          {playback.map(([name, d]) => (
            <button key={name} aria-label={name}>
              <Svg size="w-[11px] h-[11px]" box="0 0 11 11">
                <path d={d} fill="#444" />
              </Svg>
            </button>
          ))}
        </div>
        <div className="ml-[13px] flex pt-[3px]">
          <div className="w-[84px]">
            <div className="flex gap-[3px]">
              <span className="h-[3px] w-8 bg-[#f0ca88]" />
              <span className="h-[3px] w-[47px] bg-[#8fc3e6]" />
            </div>
            <div className="mt-0.5 flex gap-1">
              {features.map(([name, icon], i) => (
                <button key={i} aria-label={name}>
                  <Svg size="w-[13px] h-[13px]" box="0 0 13 13">{icon}</Svg>
                </button>
              ))}
            </div>
            <div className="mx-1.5 mt-1 flex h-1 w-[70px] border-b border-l border-[#444]">
              {[0, 1, 2, 3].map((i) => (
                <span key={i} className="h-[3px] flex-1 border-r border-[#444]" />
              ))}
            </div>
          </div>
          <Svg size="w-2 h-6 -ml-1" box="0 0 8 24">
            <path d="M0 1h8v4L4.500 8v15h-1V8L0 5z" fill="#555" />
          </Svg>
        </div>
      </div>
      <button aria-label="Preferences" className="-mr-1 self-start pt-2">
        <Settings className="h-3 w-3 text-[#444]" strokeWidth={3} />
      </button>
    </footer>
  )
}

export default function App() {
  return (
    <div className="flex min-h-screen flex-col overflow-hidden bg-[#efefef] font-['Open_Sans',sans-serif] text-[8px] leading-none text-[#333]">
      <TopBar />
      <div className="flex h-[15px] bg-[#d9d9d9]">
        <DocTab title="Coin Lau...r V5 v1*" />
        <DocTab title="CoinLau...emo v1*" active />
        <button aria-label="Collapse" className="ml-auto mr-1">
          <ChevronUp className="h-3 w-3 text-[#666]" />
        </button>
      </div>
      <main className="relative flex flex-1 flex-col">
        <Scene />
        <CanvasInputs />
        <div className="relative">
          <Toolbar />
        </div>
        <div className="grid flex-1 grid-cols-[1fr_auto_1fr] px-[3px] pb-[3px]">
          <div className="relative flex flex-col justify-between pt-1">
            <Browser />
            <PanelBar title="COMMENTS" sign="plus" />
          </div>
          <div className="relative flex items-end">
            <NavBar />
          </div>
          <div className="relative flex flex-col items-end">
            <div className="flex h-[89px] pb-3">
              <ViewCube />
            </div>
            <SketchPalette />
          </div>
        </div>
      </main>
      <Timeline />
    </div>
  )
}
